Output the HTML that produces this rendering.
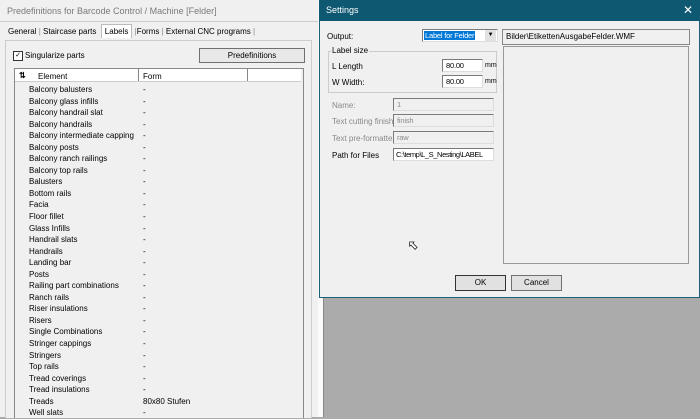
<!DOCTYPE html><html><head><style>
body{margin:0;width:700px;height:417px;overflow:hidden;background:#ababab;font-family:"Liberation Sans",sans-serif;font-size:8px;color:#000;position:relative}
.a{position:absolute}
.in{background:#fff;border:1px solid #7a7a7a;border-right-color:#ddd;border-bottom-color:#ddd;box-sizing:border-box;padding:1px 3px;font-size:7.5px;letter-spacing:-0.2px;white-space:nowrap;overflow:hidden}
.dis{color:#8a8a8a}
.btn{background:#e1e1e1;border:1px solid #707070;box-sizing:border-box;text-align:center;font-size:8px}
</style></head><body>
<div class="a" style="left:0;top:0;width:318px;height:417px;background:#f0f0f0;border-right:1px solid #aaa"></div>
<div class="a" style="left:318px;top:0;width:5px;height:417px;background:#fafafa;border-right:1px solid #888"></div>
<div class="a" style="left:7px;top:6px;color:#7a7a7a;font-size:9px">Predefinitions for Barcode Control / Machine  [Felder]</div>
<div class="a" style="left:0;top:21px;width:318px;height:1px;background:#ccc"></div>
<div class="a" style="left:8px;top:27px;font-size:8px;white-space:nowrap">General <span style="color:#888">|</span> Staircase parts &nbsp;<span style="background:#fff;padding:2px 3px;border:1px solid #bbb;border-bottom:none">Labels</span> <span style="color:#888">|</span>Forms <span style="color:#888">|</span> External CNC programs <span style="color:#888">|</span></div>
<div class="a" style="left:5px;top:40px;width:305px;height:377px;border:1px solid #ccc;border-bottom:none;background:#f0f0f0"></div>
<div class="a" style="left:13px;top:51px;width:8px;height:8px;border:1px solid #333;background:#fff;font-size:7px;line-height:8px;text-align:center">✓</div>
<div class="a" style="left:25px;top:51px">Singularize parts</div>
<div class="a btn" style="left:199px;top:48px;width:106px;height:15px;line-height:13px;background:#e8e8e8">Predefinitions</div>
<div class="a" style="left:14px;top:68px;width:288px;height:349px;border:1px solid #888;border-bottom:none;background:#f0f0f0"></div>
<div class="a" style="left:15px;top:69px;width:286px;height:12px;background:#fff;border-bottom:1px solid #ccc"></div>
<div class="a" style="left:138px;top:69px;width:1px;height:12px;background:#888"></div>
<div class="a" style="left:247px;top:69px;width:1px;height:12px;background:#888"></div>
<div class="a" style="left:19px;top:71px;font-weight:bold">⇅</div>
<div class="a" style="left:38px;top:72px">Element</div>
<div class="a" style="left:143px;top:72px">Form</div>
<div class="a" style="left:29px;top:84px;line-height:11.54px;white-space:nowrap">
Balcony balusters<br>Balcony glass infills<br>Balcony handrail slat<br>Balcony handrails<br>Balcony intermediate capping<br>Balcony posts<br>Balcony ranch railings<br>Balcony top rails<br>Balusters<br>Bottom rails<br>Facia<br>Floor fillet<br>Glass Infills<br>Handrail slats<br>Handrails<br>Landing bar<br>Posts<br>Railing part combinations<br>Ranch rails<br>Riser insulations<br>Risers<br>Single Combinations<br>Stringer cappings<br>Stringers<br>Top rails<br>Tread coverings<br>Tread insulations<br>Treads<br>Well slats</div>
<div class="a" style="left:143px;top:84px;line-height:11.54px">-<br>-<br>-<br>-<br>-<br>-<br>-<br>-<br>-<br>-<br>-<br>-<br>-<br>-<br>-<br>-<br>-<br>-<br>-<br>-<br>-<br>-<br>-<br>-<br>-<br>-<br>-<br>80x80 Stufen<br>-</div>
<div class="a" style="left:319px;top:0;width:381px;height:298px;background:#f0f0f0;border:1px solid #1b5f78;box-sizing:border-box"></div>
<div class="a" style="left:319px;top:0;width:381px;height:21px;background:#0e5872"></div>
<div class="a" style="left:326px;top:5px;color:#fff;font-size:9px">Settings</div>
<div class="a" style="left:683px;top:3px;color:#fff;font-size:12px">✕</div>
<div class="a" style="left:327px;top:32px">Output:</div>
<div class="a in" style="left:422px;top:29px;width:76px;height:13px;padding:1px"><span style="background:#0078d7;color:#fff;padding:0 1px">Label for Felder</span><span style="position:absolute;right:1px;top:0;width:11px;height:11px;background:#e1e1e1;text-align:center;font-size:6px;line-height:11px">▼</span></div>
<div class="a" style="left:502px;top:29px;width:188px;height:16px;border:1px solid #888;background:#f0f0f0;box-sizing:border-box;padding:2px 3px">Bilder\EtikettenAusgabeFelder.WMF</div>
<div class="a" style="left:503px;top:46px;width:186px;height:218px;border:1px solid #999;box-sizing:border-box"></div>
<div class="a" style="left:328px;top:51px;width:169px;height:42px;border:1px solid #ccc;box-sizing:border-box"></div>
<div class="a" style="left:331px;top:46px;background:#f0f0f0;padding:0 1px">Label size</div>
<div class="a" style="left:332px;top:62px">L Length</div>
<div class="a in" style="left:442px;top:59px;width:41px;height:13px">80.00</div>
<div class="a" style="left:485px;top:62px;font-size:7px">mm</div>
<div class="a" style="left:332px;top:78px">W Width:</div>
<div class="a in" style="left:442px;top:75px;width:41px;height:13px">80.00</div>
<div class="a" style="left:485px;top:78px;font-size:7px">mm</div>
<div class="a dis" style="left:332px;top:101px">Name:</div>
<div class="a in dis" style="left:393px;top:98px;width:101px;height:13px;background:#f0f0f0">1</div>
<div class="a dis" style="left:332px;top:117px">Text cutting finish</div>
<div class="a in dis" style="left:393px;top:114px;width:101px;height:13px;background:#f0f0f0">finish</div>
<div class="a dis" style="left:332px;top:134px">Text pre-formatte</div>
<div class="a in dis" style="left:393px;top:131px;width:101px;height:13px;background:#f0f0f0">raw</div>
<div class="a" style="left:332px;top:151px">Path for Files</div>
<div class="a in" style="left:393px;top:148px;width:101px;height:13px;letter-spacing:-0.4px;padding:1px 2px">C:\temp\L_S_Nesting\LABEL</div>
<div class="a" style="left:408px;top:238px;font-size:12px;color:#fff;-webkit-text-stroke:0.7px #000">⬉</div>
<div class="a btn" style="left:455px;top:275px;width:51px;height:16px;line-height:14px;border-color:#333">OK</div>
<div class="a btn" style="left:511px;top:275px;width:51px;height:16px;line-height:14px">Cancel</div>
</body></html>
